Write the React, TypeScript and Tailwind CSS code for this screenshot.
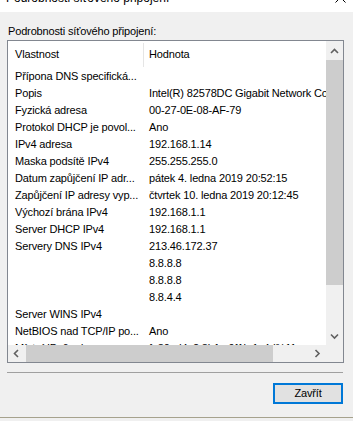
import React from "react";

const rows: [string, string][] = [
  ["Přípona DNS specifická...", ""],
  ["Popis", "Intel(R) 82578DC Gigabit Network Connection"],
  ["Fyzická adresa", "00-27-0E-08-AF-79"],
  ["Protokol DHCP je povol...", "Ano"],
  ["IPv4 adresa", "192.168.1.14"],
  ["Maska podsítě IPv4", "255.255.255.0"],
  ["Datum zapůjčení IP adr...", "pátek 4. ledna 2019 20:52:15"],
  ["Zapůjčení IP adresy vyp...", "čtvrtek 10. ledna 2019 20:12:45"],
  ["Výchozí brána IPv4", "192.168.1.1"],
  ["Server DHCP IPv4", "192.168.1.1"],
  ["Servery DNS IPv4", "213.46.172.37"],
  ["", "8.8.8.8"],
  ["", "8.8.8.8"],
  ["", "8.8.4.4"],
  ["Server WINS IPv4", ""],
  ["NetBIOS nad TCP/IP po...", "Ano"],
  ["Místní IPv6 adresa propo...", "fe80::d4c2:8b1a:9f1b:1c4d%11"],
];

function Chevron({ dir }: { dir: "up" | "down" | "left" | "right" }) {
  const d =
    dir === "up"
      ? "M1 5 L4.5 1.5 L8 5"
      : dir === "down"
      ? "M1 1.5 L4.5 5 L8 1.5"
      : dir === "left"
      ? "M5 1 L1.5 4.5 L5 8"
      : "M1.5 1 L5 4.5 L1.5 8";
  const w = dir === "up" || dir === "down" ? 9 : 7;
  const h = dir === "up" || dir === "down" ? 7 : 9;
  return (
    <svg width={w} height={h} viewBox={`0 0 ${w} ${h}`}>
      <path d={d} fill="none" stroke="#606060" strokeWidth="1.6" />
    </svg>
  );
}

export default function App() {
  return (
    <div className="w-[353px] h-[421px] bg-[#f0f0f0] overflow-hidden text-black text-[11px] tracking-[-0.15px] font-['Liberation_Sans',Arial,sans-serif]">
      <div className="h-[12px] bg-white relative overflow-hidden">
        <div className="absolute left-[6px] top-[-10px] text-[12px] leading-[16px] tracking-normal whitespace-nowrap">
          Podrobnosti síťového připojení
        </div>
        <svg className="absolute left-[335px] top-[-8px]" width="11" height="11" viewBox="0 0 11 11">
          <path d="M0.5 0.5 L10.5 10.5 M10.5 0.5 L0.5 10.5" stroke="#000" strokeWidth="1" />
        </svg>
      </div>
      <div className="pl-[8px] pt-[13px] leading-[13px] h-[26px] whitespace-nowrap">
        Podrobnosti síťového připojení:
      </div>
      <div className="ml-[7px] mt-[2px] w-[337px] h-[323px] border border-[#828790] bg-white flex flex-col">
        <div className="flex h-[304px]">
          <div className="w-[318px] overflow-hidden">
            <div className="h-[26px] flex">
              <div className="w-[135px] pl-[7px] flex items-center">Vlastnost</div>
              <div className="w-px h-[24px] mt-[2px] bg-[#e5e5e5]" />
              <div className="pl-[5px] flex items-center">Hodnota</div>
            </div>
            <div className="pt-[1px]">
              {rows.map(([k, v], i) => (
                <div key={i} className="h-[17px] leading-[17px] flex whitespace-nowrap">
                  <div className="w-[135px] pl-[7px] overflow-hidden shrink-0">{k}</div>
                  <div className="pl-[6px] shrink-0">{v}</div>
                </div>
              ))}
            </div>
          </div>
          <div className="w-[17px] bg-[#f0f0f0] flex flex-col">
            <div className="h-[18px] flex justify-center items-start pt-[7px]">
              <Chevron dir="up" />
            </div>
            <div className="mt-[1px] h-[225px] bg-[#cdcdcd]" />
            <div className="flex-1" />
            <div className="h-[17px] flex justify-center items-center">
              <Chevron dir="down" />
            </div>
          </div>
        </div>
        <div className="flex h-[17px]">
          <div className="w-[318px] bg-[#f0f0f0] flex">
            <div className="w-[17px] flex items-center justify-center">
              <Chevron dir="left" />
            </div>
            <div className="flex-1 flex">
              <div className="ml-[1px] w-[247px] bg-[#cdcdcd]" />
            </div>
            <div className="w-[17px] flex items-center justify-center">
              <Chevron dir="right" />
            </div>
          </div>
          <div className="w-[17px] bg-[#f0f0f0]" />
        </div>
      </div>
      <div className="ml-[7px] mt-[9px] w-[336px] h-px bg-[#a0a0a0]" />
      <div className="ml-[273px] mt-[10px] w-[70px] h-[21px] border-2 border-[#0078d7] bg-[#e1e1e1] flex items-center justify-center leading-none">
        Zavřít
      </div>
      <div className="mt-[13px] h-px bg-[#a6a28d]" />
    </div>
  );
}
